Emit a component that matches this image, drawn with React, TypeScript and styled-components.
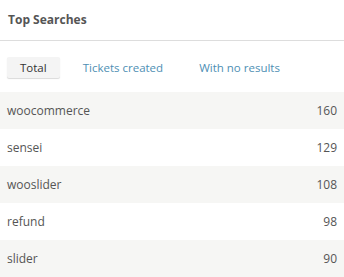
import React, { useState } from "react";
import styled, { createGlobalStyle } from "styled-components";

const Global = createGlobalStyle`
  html, body { margin: 0; padding: 0; background: #fff; }
  body { font-family: "Open Sans", "Noto Sans", sans-serif; }
`;

const Panel = styled.section`
  width: 344px;
  background: #fff;
  color: #555;
`;

const Header = styled.header`
  height: 40px;
  display: flex;
  align-items: center;
  padding: 0 8px;
  border-bottom: 1px solid #dddddd;
`;

const Title = styled.h2`
  margin: 0;
  font-size: 12px;
  font-weight: 700;
  color: #555;
  position: relative;
  top: -1px;
`;

const Tabs = styled.nav`
  height: 51px;
  display: flex;
  align-items: center;
  padding: 0 7px;
  gap: 10px;
`;

const Tab = styled.button<{ $active?: boolean }>`
  height: 21px;
  border: none;
  font-family: inherit;
  font-size: 11.5px;
  padding: 0 13px;
  cursor: pointer;
  background: ${(p) => (p.$active ? "#f4f4f4" : "transparent")};
  color: ${(p) => (p.$active ? "#333" : "#4e8fb4")};
  box-shadow: ${(p) => (p.$active ? "0 1px 1px rgba(0,0,0,0.15)" : "none")};
  border-radius: 2px;
  position: relative;
  top: 1px;
`;

const List = styled.ul`
  list-style: none;
  margin: 0;
  padding: 0;
`;

const Row = styled.li<{ $shaded: boolean }>`
  height: 37px;
  display: flex;
  align-items: center;
  justify-content: space-between;
  padding: 0 7px 0 7px;
  background: ${(p) => (p.$shaded ? "#f6f6f4" : "#fff")};
  font-size: 12px;
  color: #555;
`;

const Term = styled.span``;
const Count = styled.span``;

const data = [
  ["woocommerce", 160],
  ["sensei", 129],
  ["wooslider", 108],
  ["refund", 98],
  ["slider", 90],
] as const;

export default function App() {
  const [tab, setTab] = useState(0);
  const tabs = ["Total", "Tickets created", "With no results"];
  return (
    <Panel>
      <Global />
      <Header>
        <Title>Top Searches</Title>
      </Header>
      <Tabs>
        {tabs.map((t, i) => (
          <Tab key={t} $active={i === tab} onClick={() => setTab(i)}>
            {t}
          </Tab>
        ))}
      </Tabs>
      <List>
        {data.map(([term, n], i) => (
          <Row key={term} $shaded={i % 2 === 0}>
            <Term>{term}</Term>
            <Count>{n}</Count>
          </Row>
        ))}
      </List>
    </Panel>
  );
}
